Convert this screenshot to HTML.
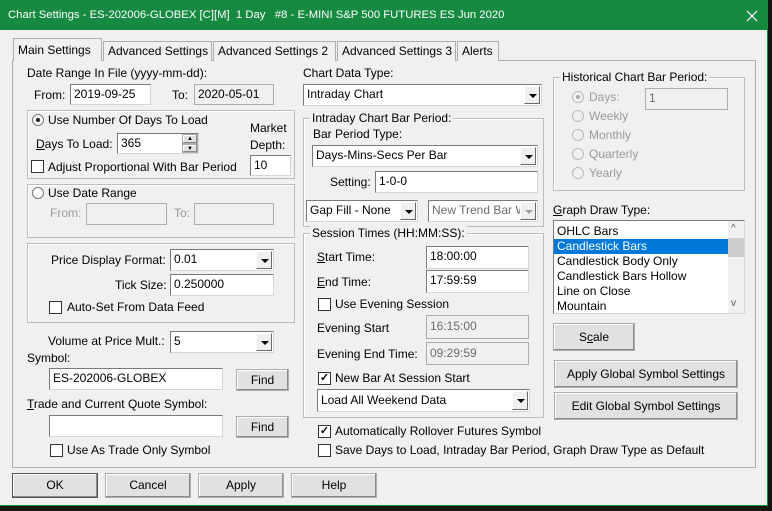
<!DOCTYPE html>
<html><head><meta charset="utf-8"><style>
*{box-sizing:border-box;margin:0;padding:0}
body{width:772px;height:511px;overflow:hidden;background:#101810;font-family:"Liberation Sans",Arial,sans-serif;font-size:12px;color:#000;position:relative}
.a{position:absolute;white-space:nowrap}
#win{position:absolute;left:0;top:0;width:768px;height:506px;background:#f0f0f0;border-right:1px solid #178a42;border-bottom:1px solid #178a42}
#title{position:absolute;left:0;top:0;width:768px;height:30px;background:#178a42;color:#fff;font-size:11.3px;line-height:30px;padding-left:8px}
.tab{position:absolute;top:41px;height:20px;border:1px solid #adadad;border-bottom:none;background:#f0f0f0;line-height:18px;padding-left:4px}
.page{position:absolute;left:12px;top:60px;width:744px;height:408px;border:1px solid #adadad;background:#f0f0f0}
.g{position:absolute;border:1px solid #bcbcbc;box-shadow:inset 1px 1px 0 #fff}
.gt{position:absolute;background:#f0f0f0;padding:0 2px;top:-8px}
.in{position:absolute;background:#fff;border:1px solid #7a7a7a;border-right-color:#d6d6d6;border-bottom-color:#d6d6d6;padding-left:3px;line-height:19px;overflow:hidden;white-space:nowrap}
.dis{background:#f0f0f0;color:#6d6d6d;border-color:#adadad}
.sel{position:absolute;background:#fff;border:1px solid #7a7a7a;border-right-color:#d6d6d6;border-bottom-color:#d6d6d6;padding-left:3px;line-height:19px;white-space:nowrap;overflow:hidden}
.sel .ar{position:absolute;right:1px;top:1px;bottom:1px;width:16px;background:#f0f0f0;border:1px solid #fff;border-right-color:#696969;border-bottom-color:#696969}
.sel .ar:after{content:"";position:absolute;left:4px;top:7px;border-left:4px solid transparent;border-right:4px solid transparent;border-top:4px solid #000}
.sel.dis .ar:after{border-top-color:#a0a0a0}
.btn{position:absolute;background:#e1e1e1;border:1px solid #adadad;box-shadow:inset -1px -1px 0 #8a8a8a,inset 1px 1px 0 #fff;text-align:center}
.cb{position:absolute;width:13px;height:13px;border:1px solid #333;background:#fff;font-size:11px;line-height:11px;text-align:center;font-weight:bold}
.rd{position:absolute;width:12px;height:12px;border-radius:50%;border:1px solid #777;background:#fff}
.rd.on:after{content:"";position:absolute;left:3px;top:3px;width:4px;height:4px;border-radius:50%;background:#222}
.rd.dis{border-color:#bbb;background:#f0f0f0}
.rd.dis.on:after{background:#aaa}
.gray{color:#9a9a9a}
u{text-decoration:underline}
</style></head><body>
<div id="win">
<div id="title">Chart Settings - ES-202006-GLOBEX [C][M]&nbsp; 1 Day &nbsp; #8 - E-MINI S&amp;P 500 FUTURES ES Jun 2020</div>
<svg class="a" style="left:746px;top:10px" width="12" height="12" viewBox="0 0 12 12"><path d="M1 1L11 11M11 1L1 11" stroke="#fff" stroke-width="1.2" fill="none"/></svg>

<div class="page"></div>
<div class="tab" style="left:103px;width:109px">Advanced Settings</div>
<div class="tab" style="left:213px;width:123px">Advanced Settings 2</div>
<div class="tab" style="left:337px;width:119px">Advanced Settings 3</div>
<div class="tab" style="left:457px;width:42px">Alerts</div>
<div class="tab" style="left:13px;top:38px;height:23px;width:89px;line-height:22px">Main Settings</div>

<div class="a" style="left:27px;top:66px">Date Range In File (yyyy-mm-dd):</div>
<div class="a" style="left:34px;top:88px">From:</div>
<div class="in" style="left:70px;top:84px;width:81px;height:21px">2019-09-25</div>
<div class="a" style="left:172px;top:88px">To:</div>
<div class="in dis" style="left:194px;top:84px;width:80px;height:21px;color:#000">2020-05-01</div>

<div class="g" style="left:27px;top:110px;width:268px;height:69px"></div>
<div class="rd on" style="left:32px;top:114px"></div>
<div class="a" style="left:48px;top:113px">Use Number Of Days To Load</div>
<div class="a" style="left:36px;top:137px"><u>D</u>ays To Load:</div>
<div class="in" style="left:117px;top:133px;width:82px;height:21px">365</div>
<div class="btn" style="left:182px;top:134px;width:16px;height:10px;font-size:6px;line-height:8px">▲</div>
<div class="btn" style="left:182px;top:144px;width:16px;height:9px;font-size:6px;line-height:8px">▼</div>
<div class="a" style="left:250px;top:121px">Market</div>
<div class="a" style="left:250px;top:138px">Depth:</div>
<div class="in" style="left:250px;top:155px;width:41px;height:21px">10</div>
<div class="cb" style="left:31px;top:160px"></div>
<div class="a" style="left:48px;top:160px">Adjust Proportional With Bar Period</div>

<div class="g" style="left:27px;top:184px;width:268px;height:54px"></div>
<div class="rd" style="left:32px;top:187px"></div>
<div class="a" style="left:48px;top:186px">Use Date Range</div>
<div class="a gray" style="left:50px;top:206px">From:</div>
<div class="in dis" style="left:86px;top:203px;width:81px;height:22px"></div>
<div class="a gray" style="left:174px;top:206px">To:</div>
<div class="in dis" style="left:194px;top:203px;width:80px;height:22px"></div>

<div class="g" style="left:27px;top:243px;width:268px;height:80px"></div>
<div class="a" style="left:51px;top:253px">Price Display Format:</div>
<div class="sel" style="left:170px;top:249px;width:104px;height:22px">0.01<div class="ar"></div></div>
<div class="a" style="left:115px;top:278px">Tick Size:</div>
<div class="in" style="left:170px;top:274px;width:104px;height:22px">0.250000</div>
<div class="cb" style="left:49px;top:301px"></div>
<div class="a" style="left:67px;top:300px">Auto-Set From Data Feed</div>

<div class="a" style="left:48px;top:334px">Volume at Price Mult.:</div>
<div class="sel" style="left:170px;top:331px;width:104px;height:22px">5<div class="ar"></div></div>
<div class="a" style="left:27px;top:351px">Symbol:</div>
<div class="in" style="left:49px;top:368px;width:174px;height:22px">ES-202006-GLOBEX</div>
<div class="btn" style="left:236px;top:369px;width:53px;height:22px;line-height:20px">Find</div>
<div class="a" style="left:27px;top:397px"><u>T</u>rade and Current Quote Symbol:</div>
<div class="in" style="left:49px;top:415px;width:174px;height:22px"></div>
<div class="btn" style="left:236px;top:416px;width:53px;height:22px;line-height:20px">Find</div>
<div class="cb" style="left:50px;top:444px"></div>
<div class="a" style="left:67px;top:443px">Use As Trade Only Symbol</div>

<div class="a" style="left:303px;top:66px">Chart Data Type:</div>
<div class="sel" style="left:303px;top:84px;width:239px;height:22px">Intraday Chart<div class="ar"></div></div>
<div class="g" style="left:303px;top:118px;width:241px;height:109px"><div class="gt" style="left:6px">Intraday Chart Bar Period:</div></div>
<div class="a" style="left:313px;top:127px">Bar Period Type:</div>
<div class="sel" style="left:312px;top:145px;width:226px;height:22px">Days-Mins-Secs Per Bar<div class="ar"></div></div>
<div class="a" style="left:330px;top:175px">Setting:</div>
<div class="in" style="left:375px;top:171px;width:163px;height:22px">1-0-0</div>
<div class="sel" style="left:306px;top:200px;width:112px;height:22px">Gap Fill - None<div class="ar"></div></div>
<div class="sel dis" style="left:428px;top:200px;width:110px;height:22px">New Trend Bar W<div class="ar"></div></div>

<div class="g" style="left:303px;top:233px;width:241px;height:185px"><div class="gt" style="left:6px">Session Times (HH:MM:SS):</div></div>
<div class="a" style="left:317px;top:250px"><u>S</u>tart Time:</div>
<div class="in" style="left:426px;top:246px;width:103px;height:23px">18:00:00</div>
<div class="a" style="left:317px;top:275px"><u>E</u>nd Time:</div>
<div class="in" style="left:426px;top:270px;width:103px;height:23px">17:59:59</div>
<div class="cb" style="left:318px;top:298px"></div>
<div class="a" style="left:335px;top:297px">Use Evening Session</div>
<div class="a" style="left:317px;top:321px">Evening Start</div>
<div class="in dis" style="left:426px;top:315px;width:103px;height:24px;line-height:21px">16:15:00</div>
<div class="a" style="left:317px;top:347px">Evening End Time:</div>
<div class="in dis" style="left:426px;top:342px;width:103px;height:23px;line-height:21px">09:29:59</div>
<div class="cb" style="left:318px;top:372px">✓</div>
<div class="a" style="left:335px;top:371px">New Bar At Session Start</div>
<div class="sel" style="left:317px;top:389px;width:213px;height:23px;line-height:20px">Load All Weekend Data<div class="ar"></div></div>

<div class="cb" style="left:318px;top:425px">✓</div>
<div class="a" style="left:335px;top:424px">Automatically Rollover Futures Symbol</div>
<div class="cb" style="left:318px;top:444px"></div>
<div class="a" style="left:335px;top:443px">Save Days to Load, Intraday Bar Period, Graph Draw Type as Default</div>

<div class="g" style="left:553px;top:77px;width:192px;height:114px"><div class="gt" style="left:6px">Historical Chart Bar Period:</div></div>
<div class="rd dis on" style="left:572px;top:91px"></div><div class="a gray" style="left:589px;top:90px">Days:</div>
<div class="in dis" style="left:645px;top:88px;width:83px;height:22px">1</div>
<div class="rd dis" style="left:572px;top:110px"></div><div class="a gray" style="left:589px;top:109px">Weekly</div>
<div class="rd dis" style="left:572px;top:129px"></div><div class="a gray" style="left:589px;top:128px">Monthly</div>
<div class="rd dis" style="left:572px;top:148px"></div><div class="a gray" style="left:589px;top:147px">Quarterly</div>
<div class="rd dis" style="left:572px;top:167px"></div><div class="a gray" style="left:589px;top:166px">Yearly</div>

<div class="a" style="left:553px;top:203px"><u>G</u>raph Draw Type:</div>
<div class="in" style="left:553px;top:220px;width:192px;height:94px;padding:0;line-height:15px">
<div style="padding:3px 0 0 3px">OHLC Bars</div>
<div style="background:#0078d7;color:#fff;padding-left:3px;width:174px">Candlestick Bars</div>
<div style="padding-left:3px">Candlestick Body Only</div>
<div style="padding-left:3px">Candlestick Bars Hollow</div>
<div style="padding-left:3px">Line on Close</div>
<div style="padding-left:3px">Mountain</div>
<div style="position:absolute;right:0;top:0;width:16px;height:92px;background:#f0f0f0"><div style="position:absolute;left:0;top:17px;width:16px;height:19px;background:#cdcdcd"></div><div style="position:absolute;left:3px;top:0;font-size:10px;color:#555">^</div><div style="position:absolute;left:3px;bottom:2px;font-size:10px;color:#555">v</div></div>
</div>
<div class="btn" style="left:553px;top:323px;width:82px;height:28px;line-height:26px">S<u>c</u>ale</div>
<div class="btn" style="left:554px;top:360px;width:184px;height:28px;line-height:26px">Apply Global Symbol Settings</div>
<div class="btn" style="left:554px;top:392px;width:184px;height:28px;line-height:26px">Edit Global Symbol Settings</div>

<div class="btn" style="left:12px;top:473px;width:86px;height:25px;line-height:23px;border-color:#555">OK</div>
<div class="btn" style="left:105px;top:473px;width:86px;height:25px;line-height:23px">Cancel</div>
<div class="btn" style="left:198px;top:473px;width:86px;height:25px;line-height:23px">Apply</div>
<div class="btn" style="left:291px;top:473px;width:86px;height:25px;line-height:23px">Help</div>
</div>
</body></html>
